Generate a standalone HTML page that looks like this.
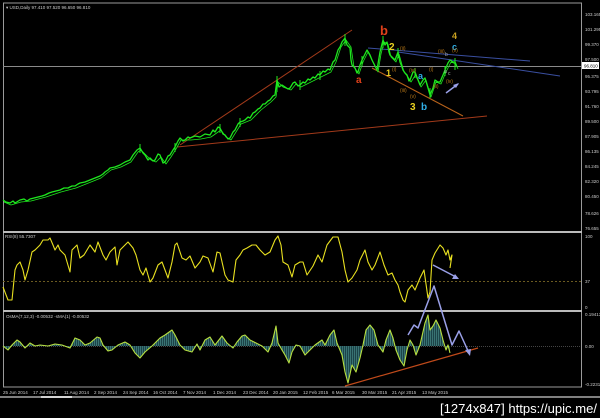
<!DOCTYPE html>
<html><head><meta charset="utf-8"><style>
html,body{margin:0;padding:0;background:#000;width:600px;height:418px;overflow:hidden}
svg{display:block}
text{font-family:"Liberation Sans",sans-serif}
</style></head><body>
<svg width="600" height="418" viewBox="0 0 600 418" xmlns="http://www.w3.org/2000/svg">
<defs>
<pattern id="hs" width="2" height="4" patternUnits="userSpaceOnUse"><rect width="1" height="4" fill="#3f8080"/><rect x="1" width="1" height="4" fill="#1f4a50"/></pattern>
</defs>
<rect width="600" height="418" fill="#000"/>
<g stroke="#9a9a9a" fill="none">
<line x1="3" y1="3" x2="582" y2="3" stroke-width="1"/>
<line x1="3.5" y1="3" x2="3.5" y2="387"/>
<line x1="581.5" y1="3" x2="581.5" y2="387"/>
<line x1="3" y1="232" x2="582" y2="232" stroke-width="2" stroke="#bbb"/>
<line x1="3" y1="311" x2="582" y2="311" stroke-width="2" stroke="#bbb"/>
<line x1="3" y1="387" x2="582" y2="387"/>
<line x1="0" y1="397" x2="600" y2="397" stroke-width="1.5" stroke="#aaa"/>
</g>
<line x1="41" y1="397" x2="72" y2="397" stroke="#fff" stroke-width="1.5"/>
<line x1="3" y1="66.5" x2="581" y2="66.5" stroke="#8a8a8a"/>
<line x1="3" y1="281.5" x2="581" y2="281.5" stroke="#6a5a20" stroke-dasharray="2,2"/>
<line x1="3" y1="346.5" x2="581" y2="346.5" stroke="#444" stroke-dasharray="1,1"/>

<line x1="180" y1="145" x2="352" y2="30" stroke="#a33a1a"/>
<line x1="177" y1="147" x2="487" y2="116" stroke="#a33a1a"/>
<line x1="372" y1="68" x2="463" y2="116" stroke="#b8621a"/>
<line x1="368" y1="48" x2="530" y2="61" stroke="#3a4fa0"/>
<line x1="398" y1="52" x2="560" y2="76" stroke="#3a4fa0"/>

<g fill="none" stroke="#1ee81e" stroke-linejoin="round">
<polyline stroke-width="1.3" points="3,200 6,202 10,203 13,201 15,203 20,200 24,199 27,201 30,199 34,198 38,197 42,196 45,195 49,193 52,192 56,191 60,190 64,188 68,188 72,186 75,186 78,184 80,183 85,182 90,180 95,178 100,176 103,174 105,172 108,170 110,168 115,167 120,165 125,162 130,160 133,155 137,150 140,148 143,153 145,155 148,160 150,158 153,161 155,160 158,154 160,155 163,163 165,162 168,156 170,155 173,150 175,147 178,141 180,138 183,141 185,140 188,137 190,138 195,136 200,137 205,134 210,135 213,130 215,132 218,127 220,128 223,134 225,135 228,139 230,138 233,132 235,130 238,124 240,122 243,121 245,120 248,117 250,118 253,113 255,112 258,109 260,108 263,104 265,104 268,101 270,100 273,96 275,95 277,80 279,87 282,85 285,87 288,89 290,88 293,83 295,82 298,86 300,85 303,82 305,83 308,79 310,80 313,77 315,78 318,74 320,75 323,71 325,72 328,69 330,70 333,62 335,60 338,50 340,47 342,42 345,38 347,45 350,48 351,60 352,65 355,68 357,73 358,72 360,65 362,60 365,54 367,50 370,55 372,60 375,66 377,70 379,58 380,52 382,44 383,40 385,45 387,42 389,52 390,55 393,58 395,60 398,52 400,62 402,67 403,70 405,73 407,75 409,81 410,80 413,72 415,72 417,78 418,80 420,85 423,80 425,78 428,88 430,95 433,88 435,80 438,82 440,82 443,75 445,70 448,63 450,60 453,62 455,62 457,67"/>
<polyline stroke-width="0.8" transform="translate(1,2)" points="3,200 10,203 20,200 30,199 45,195 60,190 75,186 90,180 100,176 110,168 120,165 130,160 137,150 140,148 150,158 155,160 160,155 165,162 170,155 175,147 180,138 190,138 200,137 210,135 220,128 225,135 230,138 240,122 250,118 260,108 270,100 275,95 277,80 282,85 290,88 295,82 300,85 310,80 320,75 330,70 335,60 340,45 345,38 350,45 353,65 358,72 362,60 367,50 372,60 377,70 380,52 383,40 387,42 390,55 395,60 398,52 403,70 407,75 410,80 415,72 420,85 425,78 430,95 435,80 440,82 445,70 450,60 455,62 457,67"/>
</g>
<g stroke="#1ee81e" stroke-width="1">
<line x1="277" y1="76" x2="277" y2="92"/><line x1="345" y1="34" x2="345" y2="46"/><line x1="383" y1="36" x2="383" y2="48"/><line x1="430" y1="88" x2="430" y2="98"/><line x1="455" y1="58" x2="455" y2="70"/>
<line x1="140" y1="144" x2="140" y2="153"/><line x1="175" y1="143" x2="175" y2="152"/><line x1="220" y1="124" x2="220" y2="133"/><line x1="240" y1="118" x2="240" y2="127"/><line x1="300" y1="80" x2="300" y2="90"/><line x1="320" y1="71" x2="320" y2="80"/><line x1="362" y1="56" x2="362" y2="66"/><line x1="398" y1="48" x2="398" y2="58"/><line x1="415" y1="68" x2="415" y2="78"/><line x1="445" y1="66" x2="445" y2="76"/>
</g>

<g font-weight="bold">
<text x="356" y="83" fill="#e0401a" font-size="10">a</text>
<text x="380" y="35" fill="#e0401a" font-size="13">b</text>
<text x="389" y="50" fill="#e8d020" font-size="10">2</text>
<text x="386" y="76" fill="#e8d020" font-size="9">1</text>
<text x="410" y="110" fill="#e8d020" font-size="10">3</text>
<text x="421" y="110" fill="#30b0e8" font-size="10">b</text>
<text x="418" y="79" fill="#30b0e8" font-size="9">a</text>
<text x="452" y="50" fill="#30b0e8" font-size="9">c</text>
<text x="452" y="39" fill="#c8a020" font-size="9">4</text>
</g>
<g fill="#b87818" font-size="5">
<text x="400" y="50">(ii)</text><text x="392" y="71">(i)</text><text x="409" y="72">(iv)</text>
<text x="400" y="92">(iii)</text><text x="410" y="98">(v)</text><text x="429" y="71">(i)</text>
<text x="433" y="88">(ii)</text><text x="438" y="53">(iii)</text><text x="452" y="52">(v)</text>
<text x="446" y="83">(iv)</text>
</g>
<text x="444" y="73" fill="#aaa" font-size="5">a</text>
<text x="448" y="75" fill="#aaa" font-size="5">c</text>
<text x="445" y="56" fill="#aaa" font-size="5">b</text>
<line x1="446" y1="93" x2="458" y2="84" stroke="#9aa0e8" stroke-width="1.5"/>
<polygon points="459,83 453,85 456,88" fill="#9aa0e8"/>

<polyline fill="none" stroke="#e8e020" stroke-width="1.1" stroke-linejoin="round" points="3,287 8,300 12,300 15,270 17,265 20,262 23,270 25,280 28,270 32,252 35,250 40,245 43,240 48,240 50,238 53,245 55,250 58,245 60,250 65,255 70,272 72,250 77,245 80,258 84,255 90,245 95,252 98,242 103,255 106,260 110,252 115,247 117,265 120,250 128,242 133,248 136,255 140,270 143,275 146,268 150,282 153,278 158,265 162,262 165,270 168,278 172,262 175,245 177,243 182,258 186,260 190,256 195,268 200,262 203,256 208,258 213,272 217,252 220,253 225,275 228,280 233,282 236,260 240,255 243,250 247,248 252,245 256,245 260,250 265,255 270,252 275,240 278,236 281,245 283,262 288,265 292,277 295,265 300,262 303,262 307,275 313,266 318,255 322,262 327,245 333,237 338,237 342,252 345,270 348,282 352,278 357,270 360,260 365,250 368,262 372,270 375,265 380,252 384,265 388,275 392,273 395,280 398,285 400,292 403,300 405,302 408,290 412,285 415,290 420,278 424,270 428,298 430,292 432,260 435,253 440,245 443,248 446,255 448,250 450,260 452,255 450,268"/>
<line x1="433" y1="265" x2="456" y2="277" stroke="#9aa0e8" stroke-width="1.5"/>
<polygon points="459,279 452,279 455,274" fill="#9aa0e8"/>

<polygon fill="url(#hs)" opacity="0.9" points="3,346 8,350 12,345 17,340 20,342 25,348 30,343 35,346 40,345 48,346 55,344 62,345 70,348 75,338 80,340 85,345 90,343 97,337 100,338 103,345 108,351 112,350 118,345 125,342 130,345 135,353 140,358 145,352 152,346 160,338 165,335 172,330 175,335 180,345 185,350 192,352 197,344 200,350 205,340 210,337 215,345 222,336 227,343 233,348 237,342 242,336 245,335 250,340 256,343 262,346 268,352 272,343 276,326 278,343 282,350 285,355 289,363 292,352 296,345 300,346 305,355 310,350 315,345 322,340 325,345 330,335 334,330 337,343 342,355 345,372 348,383 352,365 356,372 360,358 363,345 366,330 370,325 374,330 378,345 383,352 386,340 390,330 393,338 396,350 400,360 404,366 407,350 410,340 413,345 416,355 420,345 425,323 428,315 430,330 433,326 436,320 440,328 443,340 446,350 448,345 450,353 450,346"/>
<polyline fill="none" stroke="#b8e040" stroke-width="1.1" stroke-linejoin="round" points="3,346 8,350 12,345 17,340 20,342 25,348 30,343 35,346 40,345 48,346 55,344 62,345 70,348 75,338 80,340 85,345 90,343 97,337 100,338 103,345 108,351 112,350 118,345 125,342 130,345 135,353 140,358 145,352 152,346 160,338 165,335 172,330 175,335 180,345 185,350 192,352 197,344 200,350 205,340 210,337 215,345 222,336 227,343 233,348 237,342 242,336 245,335 250,340 256,343 262,346 268,352 272,343 276,326 278,343 282,350 285,355 289,363 292,352 296,345 300,346 305,355 310,350 315,345 322,340 325,345 330,335 334,330 337,343 342,355 345,372 348,383 352,365 356,372 360,358 363,345 366,330 370,325 374,330 378,345 383,352 386,340 390,330 393,338 396,350 400,360 404,366 407,350 410,340 413,345 416,355 420,345 425,323 428,315 430,330 433,326 436,320 440,328 443,340 446,350 448,345 450,353"/>
<line x1="345" y1="386" x2="478" y2="348" stroke="#c04a1a" stroke-width="1.2"/>
<polyline fill="none" stroke="#9aa0e8" stroke-width="1.5" stroke-linejoin="round" points="408,335 414,325 418,328 434,286 452,345 459,331 469,353"/>
<polygon points="470,356 465,350 471,349" fill="#9aa0e8"/>

<g fill="#ccc" font-size="4.5">
<text x="6" y="9">▾ USD,Daily  97.410 97.520 96.650 96.810</text>
<text x="5" y="238">RSI(8) 55.7307</text>
<text x="6" y="318">OsMA(7,12,3) -0.00532  -sMA(1) -0.00532</text>
</g>
<g fill="#ccc" font-size="4.5">
<text x="585" y="16">103.165</text><text x="585" y="31">101.295</text><text x="585" y="46">99.370</text>
<text x="585" y="61">97.500</text><text x="585" y="78">95.375</text><text x="585" y="93">93.795</text>
<text x="585" y="108">91.760</text><text x="585" y="123">89.500</text><text x="585" y="138">87.905</text>
<text x="585" y="153">86.135</text><text x="585" y="168">84.245</text><text x="585" y="183">82.320</text>
<text x="585" y="198">80.450</text><text x="585" y="215">78.626</text><text x="585" y="230">76.655</text>
<text x="585" y="238">100</text><text x="585" y="283">37</text><text x="585" y="309">0</text>
<text x="585" y="316">0.19413</text><text x="585" y="348">0.00</text><text x="585" y="386">-0.22312</text>
</g>
<rect x="582" y="62" width="17" height="7" fill="#fff"/>
<text x="584" y="67.5" fill="#000" font-size="4.5">96.810</text>
<g fill="#ccc" font-size="4.5">
<text x="3" y="394">25 Jun 2014</text><text x="33" y="394">17 Jul 2014</text><text x="64" y="394">11 Aug 2014</text>
<text x="94" y="394">2 Sep 2014</text><text x="123" y="394">24 Sep 2014</text><text x="153" y="394">16 Oct 2014</text>
<text x="183" y="394">7 Nov 2014</text><text x="213" y="394">1 Dec 2014</text><text x="243" y="394">23 Dec 2014</text>
<text x="273" y="394">20 Jan 2015</text><text x="303" y="394">12 Feb 2015</text><text x="332" y="394">6 Mar 2015</text>
<text x="362" y="394">30 Mar 2015</text><text x="392" y="394">21 Apr 2015</text><text x="422" y="394">13 May 2015</text>
</g>
<text x="440" y="413" fill="#fff" font-size="13" font-family="Liberation Mono, monospace" textLength="157" lengthAdjust="spacingAndGlyphs">[1274x847] https://upic.me/</text>
</svg>
</body></html>
